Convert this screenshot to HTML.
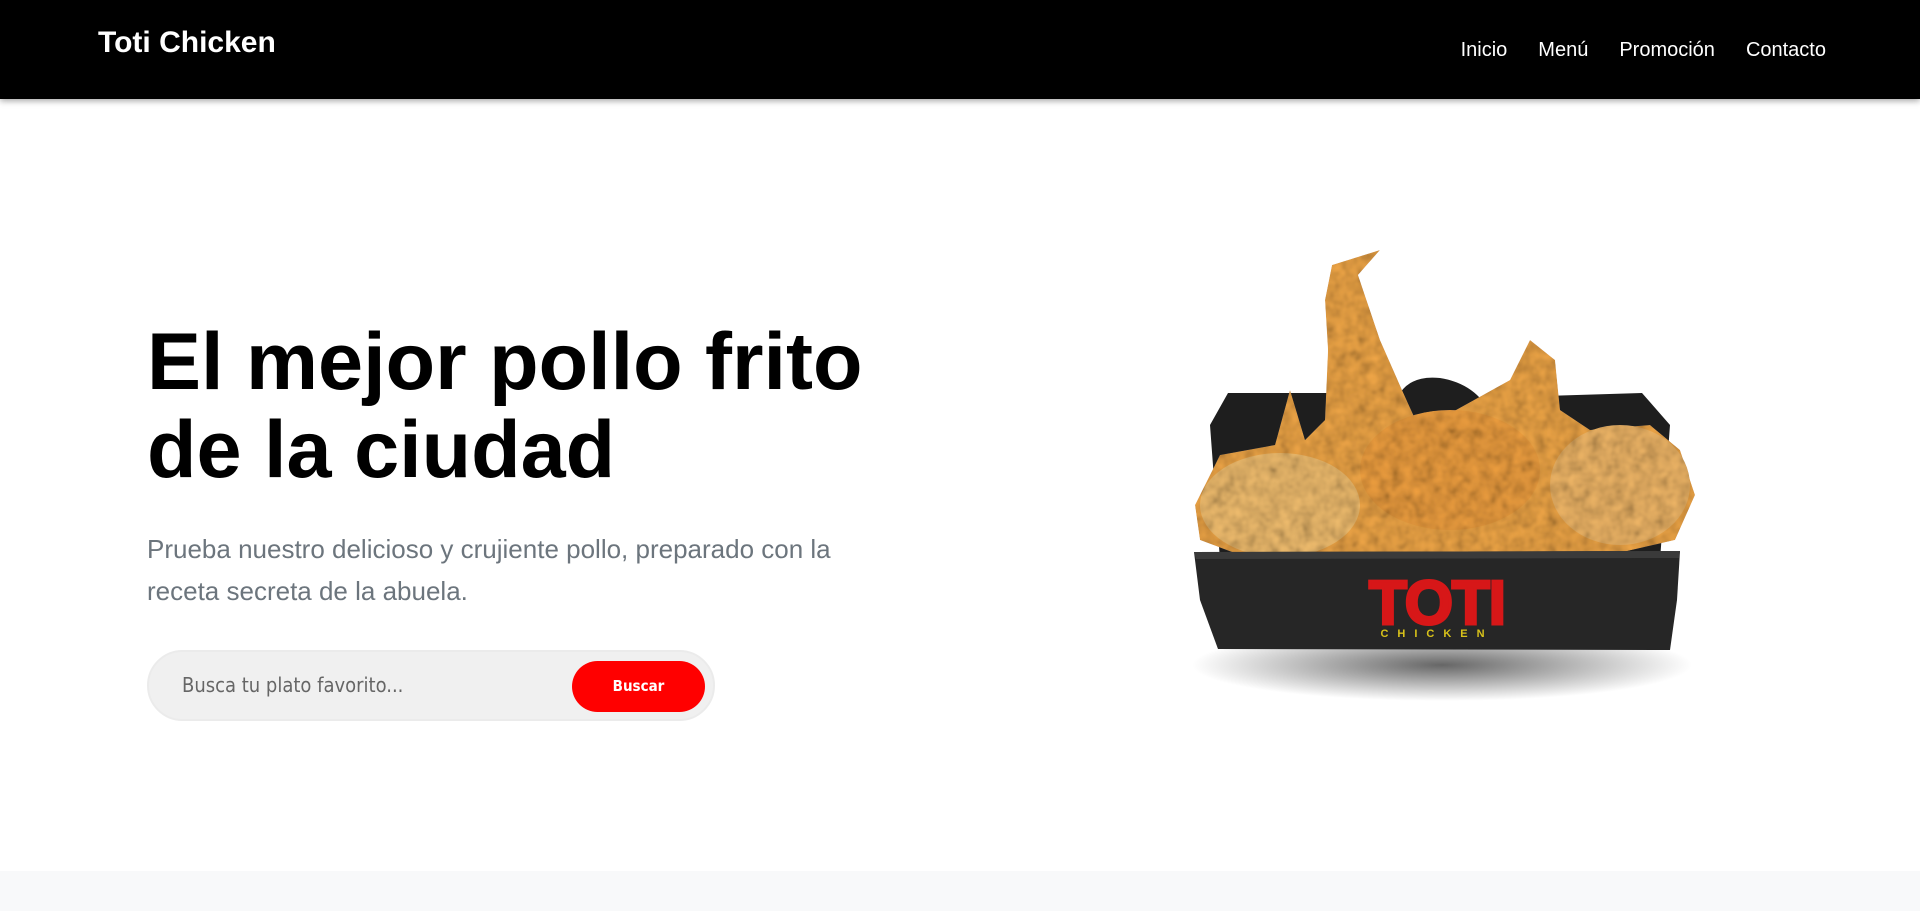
<!DOCTYPE html>
<html><head><meta charset="utf-8"><style>
*{margin:0;padding:0;box-sizing:border-box}
body{width:1920px;height:911px;overflow:hidden;background:#fff;font-family:"Liberation Sans",Arial,sans-serif;position:relative}
header{position:absolute;left:0;top:0;width:1920px;height:99px;background:#000;box-shadow:0 2px 6px rgba(0,0,0,.35);z-index:2}
.logo{position:absolute;left:98px;top:26px;color:#fff;font-weight:bold;font-size:30px}
nav{position:absolute;right:94px;top:39px;color:#fff;font-size:20px}
nav span{margin-left:31px}
h1{position:absolute;left:147px;top:318px;font-size:81px;line-height:88px;font-weight:bold;color:#000;width:770px}
p.lead{position:absolute;left:147px;top:528px;font-size:26px;line-height:42px;color:#6c757d;width:740px}
.search{position:absolute;left:147px;top:650px;width:568px;height:71px;background:#f0f0f0;border-radius:36px;border:2px solid #ebebeb}
.search .ph{position:absolute;left:33px;top:21px;font-family:"DejaVu Sans Condensed","DejaVu Sans",sans-serif;font-size:20px;color:#666}
.btn{position:absolute;left:423px;top:9px;width:133px;height:51px;background:#ff0000;border-radius:26px;color:#fff;font-weight:bold;font-size:15px;text-align:center;line-height:51px;font-family:"DejaVu Sans Condensed",sans-serif}
.foot{position:absolute;left:0;top:871px;width:1920px;height:40px;background:#f8f9fa}
svg{position:absolute;left:1180px;top:240px}
</style></head><body>
<header><div class="logo">Toti Chicken</div>
<nav><span>Inicio</span><span>Menú</span><span>Promoción</span><span>Contacto</span></nav></header>
<h1>El mejor pollo frito de la ciudad</h1>
<p class="lead">Prueba nuestro delicioso y crujiente pollo, preparado con la receta secreta de la abuela.</p>
<div class="search"><div class="ph">Busca tu plato favorito...</div><div class="btn">Buscar</div></div>
<svg width="540" height="480" viewBox="0 0 540 480">
<defs><radialGradient id="sh"><stop offset="0" stop-color="#000" stop-opacity=".6"/><stop offset="1" stop-color="#000" stop-opacity="0"/></radialGradient>
<filter id="tx"><feTurbulence type="fractalNoise" baseFrequency="0.09" numOctaves="2" result="n"/><feColorMatrix in="n" type="saturate" values="0" result="g"/><feBlend in="SourceGraphic" in2="g" mode="multiply" result="b"/><feComposite in="b" in2="SourceGraphic" operator="in"/></filter></defs>
<ellipse cx="262" cy="425" rx="250" ry="36" fill="url(#sh)"/>
<path d="M48 153 L220 153 Q232 135 260 138 Q285 142 300 158 L462 153 L490 185 L480 320 L40 320 L30 185 Z" fill="#1e1e1e"/>
<g filter="url(#tx)">
<path d="M152 25 L200 10 L178 35 L200 100 L222 150 L240 190 L330 140 L350 100 L375 120 L380 170 L410 190 L470 185 L500 210 L515 255 L495 300 L430 315 L60 315 L20 300 L15 265 L40 215 L95 205 L110 150 L125 200 L145 180 L148 110 L145 60 Z" fill="#f2a848"/>
<ellipse cx="100" cy="265" rx="80" ry="52" fill="#f4c070"/>
<ellipse cx="440" cy="245" rx="70" ry="60" fill="#f2b868"/>
<ellipse cx="270" cy="230" rx="90" ry="60" fill="#f0a040"/>
</g>
<path d="M14 312 L500 311 L497 360 L490 410 L38 409 L20 360 Z" fill="#262626"/>
<path d="M14 312 L500 311 L499 318 L16 319 Z" fill="#3a3a3a"/>
<text x="257" y="384" text-anchor="middle" font-family="Liberation Sans" font-weight="bold" font-size="62" fill="#d71718" stroke="#d71718" stroke-width="3" letter-spacing="-1">TOTI</text>
<text x="257" y="397" text-anchor="middle" font-family="Liberation Sans" font-weight="bold" font-size="11" letter-spacing="9" fill="#d8c21a">CHICKEN</text>
</svg>
<div class="foot"></div>
</body></html>
